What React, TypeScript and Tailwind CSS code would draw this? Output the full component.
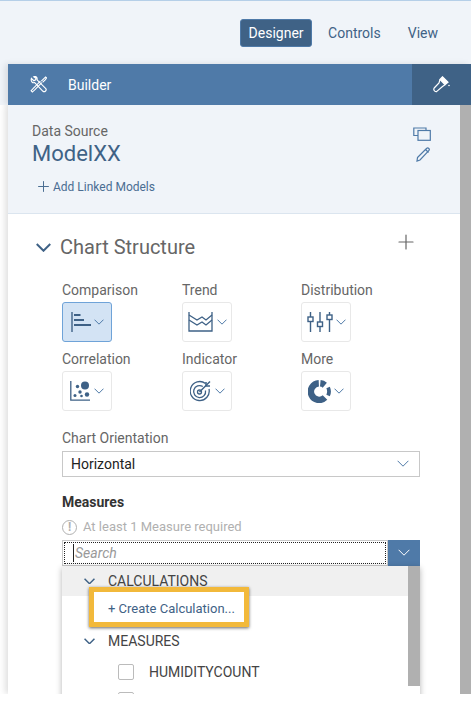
import React from 'react';
import { Plus } from 'lucide-react';

const font = "font-['Roboto','Liberation_Sans',sans-serif]";

function Chevron({ width, color = '#4f7aa8', stroke = 1 }: { width: number; color?: string; stroke?: number }) {
  return (
    <svg width={width} height={width * 0.6} viewBox="0 0 12 7.200" fill="none" stroke={color} strokeWidth={stroke * 12 / width} className="shrink-0">
      <path d="M.6.8L6 6.200 11.400.8" />
    </svg>
  );
}

function BarIcon() {
  return (
    <svg width="20" height="20" viewBox="0 0 20 20" fill="none" stroke="#3e6186">
      <path d="M1 0v20" strokeWidth="1.400" />
      <path d="M3 3h6.500M3 8h10M3 13h17" strokeWidth="2" />
    </svg>
  );
}

function TrendIcon() {
  return (
    <svg width="26" height="20" viewBox="0 0 26 20" fill="none" stroke="#3e6186" strokeWidth="1.300">
      <path d="M1 0v19h23V0" />
      <path d="M1 3l8 5 5-3 4 3 6-5" />
      <path d="M1 8l8 5 5-3 4 3 6-5" />
    </svg>
  );
}

function BoxPlotIcon() {
  return (
    <svg width="26" height="20" viewBox="0 0 26 20" fill="none" stroke="#3e6186" strokeWidth="1.400">
      <path d="M3.500 0v5M3.500 10v10M13 0v10M13 15v5M22.500 0v3M22.500 8v12" />
      <rect x="1" y="5" width="5" height="4.500" />
      <rect x="10.500" y="10" width="5" height="4.500" />
      <rect x="20" y="3" width="5" height="4.500" />
    </svg>
  );
}

function ScatterIcon() {
  return (
    <svg width="21" height="20" viewBox="0 0 21 20" fill="#3e6186">
      <path d="M.8 0v19.200H20" fill="none" stroke="#3e6186" strokeWidth="1.300" />
      <circle cx="15" cy="4.500" r="4" />
      <circle cx="7.500" cy="5.500" r="1.700" />
      <circle cx="10" cy="11" r="1.700" />
      <circle cx="5" cy="14.500" r="1.500" />
      <circle cx="11.500" cy="15" r="1.300" />
      <circle cx="17" cy="13.500" r="2.200" />
    </svg>
  );
}

function TargetIcon() {
  return (
    <svg width="22" height="22" viewBox="0 0 22 22" fill="none" stroke="#3e6186" strokeWidth="1.300">
      <path d="M15.500 3.500A9.500 9.500 0 1 0 19 9" />
      <path d="M12.800 6.500A6 6 0 1 0 15.500 10.500" />
      <circle cx="9.500" cy="12" r="2" />
      <path d="M9.500 12L20 1.500" strokeWidth="1.500" />
      <path d="M16 2v4h4" strokeWidth="1.500" />
    </svg>
  );
}

function DonutIcon() {
  return (
    <svg width="23" height="23" viewBox="0 0 23 23" fill="none" stroke="#3e6186" strokeWidth="6.500">
      <path d="M17 17.500A8.300 8.300 0 1 1 10.800 3.300" />
      <path d="M12.300 3.300A8.300 8.300 0 0 1 16.800 5.200" />
      <path d="M20.100 7.500A9.500 9.500 0 0 1 20.100 15.500" strokeWidth="3.800" />
    </svg>
  );
}

function ToolsIcon() {
  return (
    <svg width="17" height="17" viewBox="0 0 18 18" fill="none" stroke="#fff" strokeWidth="1.200">
      <path d="M1.500 2.500L4 5l2-1 .2-1.700L4 .8C6-.2 8 1.400 7.500 4L16.500 13c1 1 .6 2.200 0 2.900-.8.800-2 1-3 0L5 7C2.500 7.800.6 5.500 1.500 2.500z" />
      <path d="M11 5.500L3.500 13 1.200 15.500 2.500 17l2.500-2.300 7.500-7.700" />
      <path d="M12 5.500l3-3 1.500-1.500 1 1-1.200 1.800-3 3" />
    </svg>
  );
}

function BrushIcon() {
  return (
    <svg width="17" height="17" viewBox="0 0 17 17" fill="none" stroke="#fff" strokeWidth="1.200">
      <path d="M7 3.500L9.500.8l5.500 5.500-3 2.500z" fill="#fff" />
      <path d="M7 3.500L6 7 1.200 12c-.6.800-.6 1.500 0 2.500s1.800 1.500 2.600.9L9.500 10.500 12 8.800" />
      <circle cx="16" cy="9.500" r=".8" fill="#fff" stroke="none" />
    </svg>
  );
}

function CopyIcon() {
  return (
    <svg width="18" height="14" viewBox="0 0 18 14" fill="none" stroke="#4f7aa8" strokeWidth="1.200">
      <path d="M5 8.500H.8V1H13v2.500" />
      <rect x="5" y="3.500" width="12.300" height="9.800" />
    </svg>
  );
}

function PencilIcon() {
  return (
    <svg width="15" height="15" viewBox="0 0 15 15" fill="none" stroke="#4f7aa8" strokeWidth="1.200">
      <path d="M1.500 10.500L10.500 1.500c.8-.7 1.600-.7 2.300 0s.7 1.500 0 2.200L4 13 1 14z" />
      <path d="M9.500 2.500l3 3" />
    </svg>
  );
}

function ChartTile({ label, active, icon }: { label: string; active?: boolean; icon: React.ReactNode }) {
  return (
    <div className="flex flex-col">
      <div className="text-[14px] leading-[19px] text-[#666]">{label}</div>
      <div className={`mt-[2px] flex h-[40px] w-[50px] items-center justify-center gap-[3px] rounded-[3px] border ${active ? 'border-[#6fa3d8] bg-[#d3e3f4]' : 'border-[#e8e8e8] bg-white'}`}>
        {icon}
        <Chevron width={10} />
      </div>
    </div>
  );
}

export default function App() {
  return (
    <div className={`${font} flex h-[702px] w-[471px] flex-col overflow-hidden bg-white`}>
      <div className="h-[1px] bg-[#b5cfe8]" />
      <div className="flex h-[63px] items-start justify-end bg-[#f0f4f9] pt-[18px] pr-[33px] text-[14px]">
        <div className="flex h-[28px] w-[72px] items-center justify-center rounded-[3px] border border-[#4f7aa8] bg-[#3f6286] text-white">Designer</div>
        <div className="ml-[16px] leading-[28px] text-[#3f6286]">Controls</div>
        <div className="ml-[27px] leading-[28px] text-[#3f6286]">View</div>
      </div>

      <div className="bg-[#f0f4f9] pl-[8px]">
        <div className="flex h-[41px] items-stretch bg-[#4f7aa8] text-white shadow-[-3px_0_6px_rgba(0,0,0,0.1)]">
          <div className="flex flex-1 items-center pl-[22px]">
            <ToolsIcon />
            <span className="ml-[21px] pt-[1px] text-[14px]">Builder</span>
          </div>
          <div className="flex w-[59px] items-center justify-center bg-[#3f6286]">
            <BrushIcon />
          </div>
        </div>
      </div>

      <div className="h-[589px] overflow-hidden pl-[8px]">
        <div className="flex h-full shadow-[-3px_0_6px_rgba(0,0,0,0.12)]">
          <div className="relative h-[589px] w-[452px] overflow-hidden bg-white">
            <div className="flex h-[109px] justify-between border-b border-[#dbe5ef] bg-[#f0f4f9] pt-[18px] pl-[24px] pr-[29px]">
              <div>
                <div className="text-[14px] leading-[17px] text-[#666]">Data Source</div>
                <div className="text-[22px] leading-[27px] text-[#3f6286]">ModelXX</div>
                <div className="mt-[11px] ml-[4px] flex items-center text-[12px] leading-[16px] text-[#4a6d92]">
                  <Plus size={17} strokeWidth={1.400} className="mr-[1px] -ml-[1px]" />
                  Add Linked Models
                </div>
              </div>
              <div className="flex flex-col items-end pt-[4px]">
                <CopyIcon />
                <div className="mt-[6px]"><PencilIcon /></div>
              </div>
            </div>

            <div className="flex items-center pt-[19px] pl-[28px] pr-[42px]">
              <Chevron width={15} color="#3f6286" stroke={2} />
              <span className="ml-[9px] text-[20px] leading-[28px] text-[#666]">Chart Structure</span>
              <Plus size={24} strokeWidth={1.200} color="#666" className="ml-auto -mt-[10px]" />
            </div>

            <div className="mt-[20px] ml-[54px] grid w-[300px] grid-cols-[120px_119px_61px] gap-y-[8px]">
              <ChartTile label="Comparison" active icon={<BarIcon />} />
              <ChartTile label="Trend" icon={<TrendIcon />} />
              <ChartTile label="Distribution" icon={<BoxPlotIcon />} />
              <ChartTile label="Correlation" icon={<ScatterIcon />} />
              <ChartTile label="Indicator" icon={<TargetIcon />} />
              <ChartTile label="More" icon={<DonutIcon />} />
            </div>

            <div className="mt-[18px] ml-[54px] w-[358px]">
              <div className="text-[14px] leading-[19px] text-[#666]">Chart Orientation</div>
              <div className="mt-[3px] flex h-[26px] items-center justify-between border border-[#c8c8c8] bg-white pl-[8px] pr-[10px] text-[14px] text-[#222]">
                Horizontal
                <Chevron width={12} />
              </div>

              <div className="mt-[16px] text-[14px] font-bold leading-[19px] text-[#333]">Measures</div>
              <div className="mt-[7px] flex items-center text-[13px] leading-[16px] text-[#b0b0b0]">
                <span className="mr-[6px] flex h-[15px] w-[15px] items-center justify-center rounded-full border border-[#b0b0b0] text-[12px] font-bold leading-none">!</span>
                At least 1 Measure required
              </div>
              <div className="mt-[5px] flex h-[26px]">
                <div className="flex-1 border border-[#c8c8c8] bg-white p-[1px]">
                  <div className="flex h-full items-center border border-dotted border-[#222] pl-[8px] text-[14px] italic text-[#999]">
                    <span className="h-[18px] w-[1px] bg-[#222]" />
                    <span className="ml-[1px]">Search</span>
                  </div>
                </div>
                <div className="flex w-[32px] items-center justify-center bg-[#4f7aa8]">
                  <Chevron width={12} color="#fff" />
                </div>
              </div>
            </div>

            <div className="absolute top-[461px] left-[54px] flex h-[140px] w-[358px] bg-white shadow-[0_2px_6px_rgba(0,0,0,0.3)]">
              <div className="flex-1 overflow-hidden">
                <div className="flex h-[30px] items-center bg-[#f0f0f0] pl-[22px] text-[14px] text-[#444]">
                  <Chevron width={11} color="#3f6286" stroke={1.500} />
                  <span className="ml-[13px]">CALCULATIONS</span>
                </div>
                <div className="h-[30px]" />
                <div className="flex h-[30px] items-center pl-[22px] text-[14px] text-[#444]">
                  <Chevron width={11} color="#3f6286" stroke={1.500} />
                  <span className="ml-[13px]">MEASURES</span>
                </div>
                <div className="flex h-[32px] items-center pl-[56px] text-[14px] text-[#444]">
                  <span className="h-[16px] w-[16px] rounded-[2px] border border-[#bbb]" />
                  <span className="ml-[15px]">HUMIDITYCOUNT</span>
                </div>
                <div className="mt-[4px] ml-[56px] h-[16px] w-[16px] rounded-[2px] border border-[#bbb]" />
              </div>
              <div className="h-[120px] w-[12px] bg-[#b0b0b0]" />
            </div>

            <div className="absolute top-[482px] left-[81px] flex h-[40px] w-[160px] items-center whitespace-nowrap border-[5px] border-[#f2b93b] bg-white pt-[3px] pl-[14px] text-[13px] text-[#3f6286] shadow-[0_1px_3px_rgba(0,0,0,0.6)]">
              + Create Calculation...
            </div>
          </div>
          <div className="w-[11px] bg-[#b0b0b0]" />
        </div>
      </div>
    </div>
  );
}
